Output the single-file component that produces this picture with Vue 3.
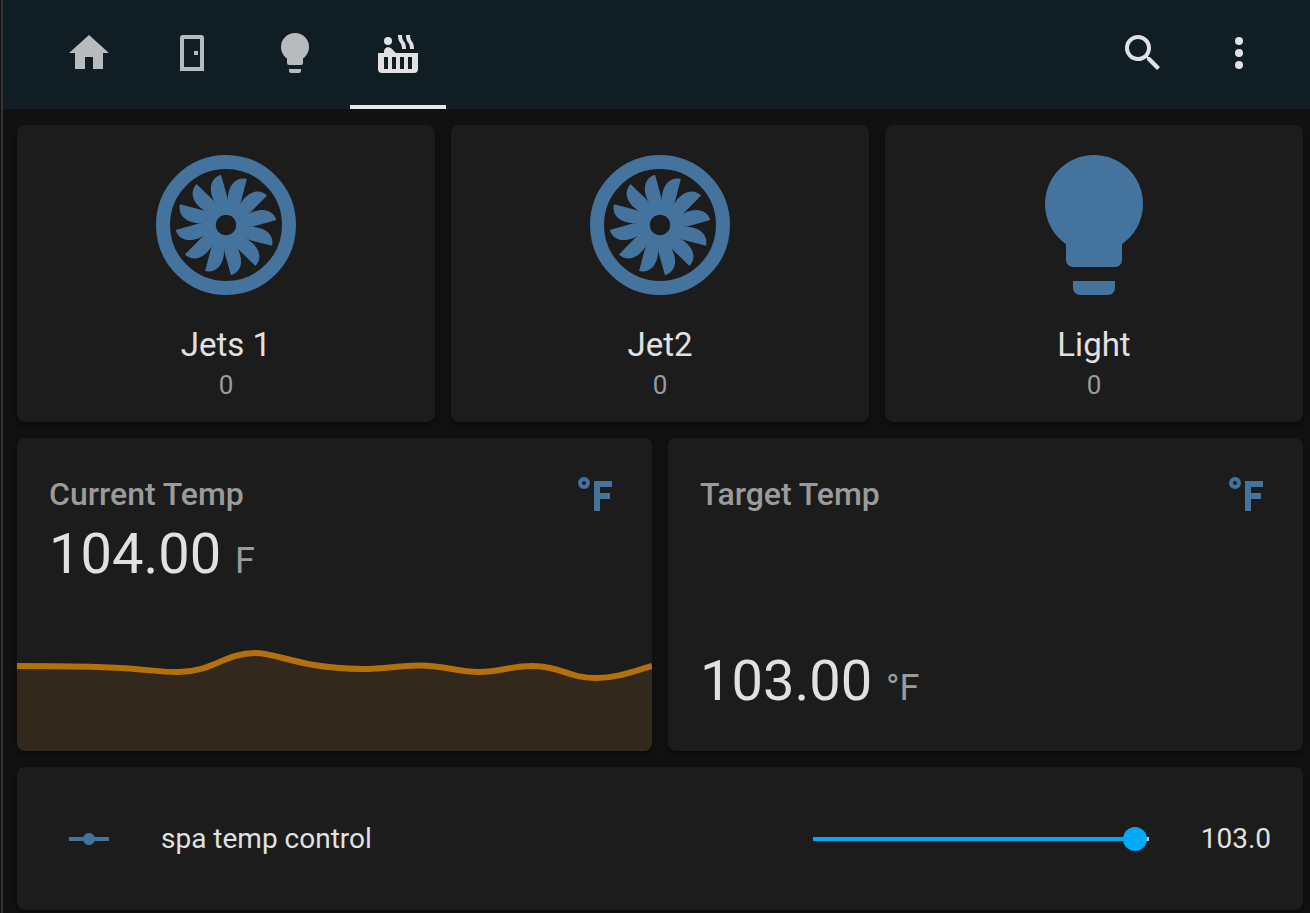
<script setup>
import { ref, computed } from 'vue'

const bulb = 'M12 2A7 7 0 0 0 5 9C5 11.38 6.19 13.47 8 14.74V17A1 1 0 0 0 9 18H15A1 1 0 0 0 16 17V14.74C17.81 13.47 19 11.38 19 9A7 7 0 0 0 12 2M9 21A1 1 0 0 0 10 22H14A1 1 0 0 0 15 21V20H9V21Z'
const tabs = [
  { name: 'Home', path: 'M10 20V14H14V20H19V12H22L12 3L2 12H5V20H10Z' },
  { name: 'Doors', path: 'M6 21V4.5A1.5 1.5 0 0 1 7.5 3H16.5A1.5 1.5 0 0 1 18 4.5V21ZM8 5V19H16V5ZM13 11H15V13H13Z' },
  { name: 'Lights', path: bulb },
  { name: 'Spa', path: 'M2 12H22V20A2 2 0 0 1 20 22H4A2 2 0 0 1 2 20ZM5 14V20H7V14ZM9 14V20H11V14ZM13 14V20H15V14ZM17 14V20H19V14Z' }
]
const activeTab = ref('Spa')
const blades = Array.from({ length: 12 }, (_, i) => i * 30)
const devices = [
  { name: 'Jets 1', state: '0', icon: 'turbine' },
  { name: 'Jet2', state: '0', icon: 'turbine' },
  { name: 'Light', state: '0', icon: 'bulb' }
]
const min = 80
const max = 104
const target = ref(103)
const fill = computed(() => ({ '--fill': ((target.value - min) / (max - min)) * 100 + '%' }))
</script>

<template>
  <div class="app">
    <header class="bar">
      <nav class="tabs" aria-label="Views">
        <button
          v-for="t in tabs"
          :key="t.name"
          type="button"
          class="tab"
          :class="{ active: activeTab === t.name }"
          :aria-label="t.name"
          @click="activeTab = t.name"
        >
          <svg class="icon" viewBox="0 0 24 24">
            <path fill-rule="evenodd" :d="t.path" />
            <template v-if="t.name === 'Spa'">
              <circle cx="7" cy="6" r="2" />
              <path d="M5 12V11.2C5 10 5.9 9.1 7 9.1C7.8 9.1 8.4 9.4 8.9 9.9L11.15 12.2Z" />
              <path d="M12 3H14C14 4.8 14.4 5.6 15 6.3S16 8.2 16 10H14C14 8.2 13.6 7.4 13 6.7S12 4.8 12 3Z" />
              <path d="M16 3H18C18 4.8 18.4 5.6 19 6.3S20 8.2 20 10H18C18 8.2 17.6 7.4 17 6.7S16 4.8 16 3Z" />
            </template>
          </svg>
        </button>
      </nav>
      <div class="actions">
        <button type="button" class="action" aria-label="Search">
          <svg class="icon" viewBox="0 0 24 24">
            <path d="M9.5 3A6.5 6.5 0 0 1 16 9.5C16 11.11 15.41 12.59 14.44 13.73L14.71 14H15.5L20.5 19L19 20.5L14 15.5V14.71L13.73 14.44C12.59 15.41 11.11 16 9.5 16A6.5 6.5 0 0 1 3 9.5A6.5 6.5 0 0 1 9.5 3M9.5 5C7 5 5 7 5 9.5S7 14 9.5 14 14 12 14 9.5 12 5 9.5 5Z" />
          </svg>
        </button>
        <button type="button" class="action" aria-label="Menu">
          <svg class="icon" viewBox="0 0 24 24">
            <circle cx="12" cy="6" r="2" /><circle cx="12" cy="12" r="2" /><circle cx="12" cy="18" r="2" />
          </svg>
        </button>
      </div>
    </header>

    <main class="view">
      <section class="row">
        <button v-for="d in devices" :key="d.name" type="button" class="card device">
          <svg v-if="d.icon === 'turbine'" class="big" viewBox="0 0 24 24">
            <circle cx="12" cy="12" r="9" fill="none" stroke="currentColor" stroke-width="2" />
            <g transform="translate(12 12)">
              <path
                v-for="a in blades"
                :key="a"
                :transform="`rotate(${a})`"
                d="M-.76 -1.3L-1.71 -3.48C-2.6 -5.3 -2.1 -6.75 -.71 -7.19L.24 -3.76L0 -1.5Z"
              />
              <circle r="2.5" fill="none" stroke="currentColor" stroke-width="2" />
            </g>
          </svg>
          <svg v-else class="big" viewBox="0 0 24 24"><path :d="bulb" /></svg>
          <span class="device-name">{{ d.name }}</span>
          <span class="device-state">{{ d.state }}</span>
        </button>
      </section>

      <section class="row">
        <article class="card sensor">
          <div class="sensor-head">
            <h2>Current Temp</h2>
            <svg class="unit-icon" viewBox="0 0 24 24">
              <path fill-rule="evenodd" d="M11 20V5H20V8H14V11H19V14H14V20ZM6 3A3 3 0 1 1 6 9A3 3 0 1 1 6 3ZM6 5A1 1 0 1 0 6 7A1 1 0 1 0 6 5Z" />
            </svg>
          </div>
          <p class="reading">104.00 <span>F</span></p>
          <svg class="graph" viewBox="0 0 635 105" preserveAspectRatio="none">
            <path class="area" d="M0 20C50 20 85 20 118 23C140 25 152 26.5 162 26C195 26 208 7 238 7C262 7 280 22 345 23C370 23 380 19.5 403 19.5C430 20 440 26 462 26C485 26 492 20 515 20C544 20 550 32 580 32C600 32 617 25 635 20V105H0Z" />
            <path class="line" d="M0 20C50 20 85 20 118 23C140 25 152 26.5 162 26C195 26 208 7 238 7C262 7 280 22 345 23C370 23 380 19.5 403 19.5C430 20 440 26 462 26C485 26 492 20 515 20C544 20 550 32 580 32C600 32 617 25 635 20" />
          </svg>
        </article>
        <article class="card sensor spread">
          <div class="sensor-head">
            <h2>Target Temp</h2>
            <svg class="unit-icon" viewBox="0 0 24 24">
              <path fill-rule="evenodd" d="M11 20V5H20V8H14V11H19V14H14V20ZM6 3A3 3 0 1 1 6 9A3 3 0 1 1 6 3ZM6 5A1 1 0 1 0 6 7A1 1 0 1 0 6 5Z" />
            </svg>
          </div>
          <p class="reading">103.00 <span>°F</span></p>
        </article>
      </section>

      <section class="card control">
        <svg class="icon accent" viewBox="0 0 24 24">
          <path d="M2 11H9.17C9.58 9.83 10.69 9 12 9S14.42 9.83 14.83 11H22V13H14.83C14.42 14.17 13.31 15 12 15S9.58 14.17 9.17 13H2Z" />
        </svg>
        <label for="spa-temp">spa temp control</label>
        <input id="spa-temp" v-model.number="target" type="range" :min="min" :max="max" step="1" :style="fill" />
        <output for="spa-temp">{{ target.toFixed(1) }}</output>
      </section>
    </main>
  </div>
</template>

<style>
body {
  margin: 0;
  background: #111111;
}
</style>

<style scoped>
.app {
  box-sizing: border-box;
  min-height: 100vh;
  margin-left: 1px;
  border-left: 2px solid #333333;
  background: #111111;
  color: #e1e1e1;
  font-family: Roboto, sans-serif;
}
button {
  border: 0;
  padding: 0;
  background: none;
  color: inherit;
  font: inherit;
  cursor: pointer;
}
svg {
  display: block;
  fill: currentColor;
}
.icon {
  width: 48px;
  height: 48px;
  flex: none;
}
.bar {
  display: flex;
  justify-content: space-between;
  height: 109px;
  padding: 0 23px 0 38px;
  background: #101e24;
}
.tabs {
  display: flex;
  gap: 7px;
}
.tab {
  box-sizing: border-box;
  display: flex;
  justify-content: center;
  align-items: center;
  width: 96px;
  padding-top: 1px;
  border-bottom: 4px solid transparent;
  color: #b7bbbd;
}
.tab.active {
  color: #e1e1e1;
  border-bottom-color: #e7e9e9;
}
.actions {
  display: flex;
}
.action {
  display: flex;
  align-items: center;
  justify-content: center;
  width: 96px;
  padding-bottom: 3px;
}
.view {
  display: flex;
  flex-direction: column;
  gap: 16px;
  padding: 16px 7px 3px 14px;
}
.row {
  display: flex;
  gap: 16px;
}
.card {
  box-sizing: border-box;
  border-radius: 8px;
  background: #1c1c1c;
  box-shadow: 0 3px 4px rgba(0, 0, 0, 0.4);
}
.row > .card {
  flex: 1 1 0;
  min-width: 0;
}
.device {
  display: flex;
  flex-direction: column;
  align-items: center;
  padding: 16px 16px 20px;
}
.big {
  width: 168px;
  height: 168px;
  color: #44739e;
}
.device-name {
  margin-top: 16px;
  font-size: 33px;
  line-height: 40px;
}
.device-state {
  margin-top: 4px;
  font-size: 26px;
  line-height: 33px;
  color: #9b9b9b;
}
.sensor {
  display: flex;
  flex-direction: column;
  height: 313px;
  overflow: hidden;
}
.sensor-head {
  display: flex;
  justify-content: space-between;
  padding: 33px 32px 0;
}
h2 {
  margin: 0;
  font-size: 32px;
  line-height: 46px;
  font-weight: 500;
  color: #9b9b9b;
}
.unit-icon {
  width: 48px;
  height: 48px;
  color: #44739e;
}
.reading {
  margin: 0;
  padding: 0 32px;
  font-size: 56px;
  line-height: 70px;
}
.reading span {
  font-size: 36px;
  color: #9b9b9b;
}
.spread {
  justify-content: space-between;
  padding-bottom: 28px;
}
.graph {
  width: 100%;
  height: 105px;
  margin-top: auto;
}
.area {
  fill: #32281b;
}
.line {
  fill: none;
  stroke: #b3700b;
  stroke-width: 6px;
}
.control {
  display: flex;
  align-items: center;
  min-height: 143px;
  padding: 0 32px 0 48px;
  font-size: 28px;
  line-height: 40px;
}
.accent {
  color: #44739e;
}
.control label {
  flex: 1;
  margin-left: 48px;
}
.control output {
  width: 110px;
  text-align: right;
}
.control input {
  appearance: none;
  width: 360px;
  height: 48px;
  margin: 0;
  background:
    linear-gradient(to right, #03a9f4 var(--fill), #bdbdbd var(--fill)) center / calc(100% - 24px) 4px no-repeat;
  cursor: pointer;
}
.control input::-webkit-slider-thumb {
  appearance: none;
  width: 24px;
  height: 24px;
  border: 0;
  border-radius: 50%;
  background: #03a9f4;
}
</style>
